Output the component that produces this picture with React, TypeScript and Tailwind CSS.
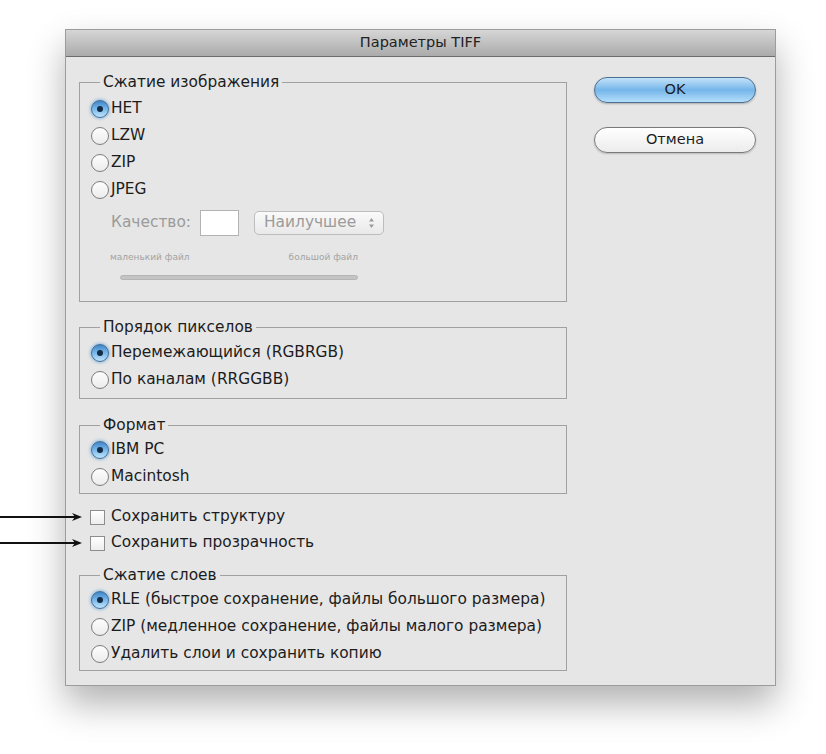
import React from 'react'

function Radio({ checked }: { checked?: boolean }) {
  if (checked) {
    return (
      <span className="w-[18px] h-[18px] shrink-0 rounded-full border border-[#3f6d98] bg-linear-to-b from-[#3f86c8] via-[#79b8ea] to-[#bfe3fb] flex items-center justify-center shadow-[0_0_3px_1px_rgba(80,150,215,0.55)]">
        <span className="w-[6px] h-[6px] rounded-full bg-[#142b44]" />
      </span>
    )
  }
  return <span className="w-[18px] h-[18px] shrink-0 rounded-full border border-[#7d7d7d] bg-linear-to-b from-[#fdfdfd] to-[#ececec]" />
}

function RadioRow({ label, checked }: { label: string; checked?: boolean }) {
  return (
    <div className="h-[27px] flex items-center gap-[2px]">
      <Radio checked={checked} />
      <span>{label}</span>
    </div>
  )
}

function Group({ title, children, className }: { title: string; children: React.ReactNode; className?: string }) {
  return (
    <fieldset className={`border border-[#a1a1a1] px-[11px] ${className ?? ''}`}>
      <legend className="ml-[9px] px-[3px] leading-[18px]">{title}</legend>
      {children}
    </fieldset>
  )
}

function Arrow() {
  return (
    <svg className="absolute left-[-79px] top-[8px]" width="84" height="10" viewBox="0 0 84 10">
      <line x1="0" y1="5" x2="76" y2="5" stroke="#111" strokeWidth="2" />
      <path d="M72 1 L82 5 L72 9 L75 5 Z" fill="#111" />
    </svg>
  )
}

function CheckRow({ label }: { label: string }) {
  return (
    <div className="relative h-[26px] flex items-center gap-[6px] pl-[11px]">
      <Arrow />
      <span className="w-[15px] h-[15px] shrink-0 border border-[#8d8d8d] bg-linear-to-b from-white to-[#ededed]" />
      <span>{label}</span>
    </div>
  )
}

export default function App() {
  return (
    <div className="w-[826px] h-[754px] bg-white pt-[29px] pl-[65px] font-['DejaVu_Sans',sans-serif] text-[15.4px] text-[#1c1c1c]">
      <div className="w-[711px] h-[657px] bg-[#e6e6e6] border border-[#9c9c9c] shadow-[0_18px_34px_rgba(0,0,0,0.3)]">
        {/* Title bar */}
        <div className="h-[27px] bg-linear-to-b from-[#d6d6d6] to-[#ababab] border-b border-[#6d6d6d] flex items-center justify-center text-[14.5px] text-[#222]">
          Параметры TIFF
        </div>

        <div className="flex pl-[13px] pt-[16px]">
          {/* Left column */}
          <div className="w-[488px] flex flex-col">
            <Group title="Сжатие изображения" className="pt-[4px] pb-[21px]">
              <RadioRow label="НЕТ" checked />
              <RadioRow label="LZW" />
              <RadioRow label="ZIP" />
              <RadioRow label="JPEG" />
              <div className="ml-[20px] mt-[7px] h-[26px] flex items-center text-[#9b9b9b]">
                <span>Качество:</span>
                <span className="ml-[9px] w-[39px] h-[26px] bg-white border border-[#b3b3b3]" />
                <div className="ml-[15px] w-[130px] h-[24px] rounded-[5px] border border-[#bdbdbd] bg-linear-to-b from-[#fafafa] to-[#e9e9e9] flex items-center pl-[9px] pr-[8px]">
                  <span className="flex-1">Наилучшее</span>
                  <svg width="7" height="12" viewBox="0 0 7 12">
                    <path d="M3.5 1 L6 4.5 L1 4.5 Z" fill="#9b9b9b" />
                    <path d="M3.5 11 L6 7.5 L1 7.5 Z" fill="#9b9b9b" />
                  </svg>
                </div>
              </div>
              <div className="ml-[19px] mt-[15px] h-[12px] flex items-center text-[9px] text-[#a3a3a3] leading-[12px]">
                <span>маленький файл</span>
                <span className="ml-[99px]">большой файл</span>
              </div>
              <div className="ml-[29px] mt-[12px] w-[238px] h-[5px] rounded-full bg-[#c4c4c4] border border-[#b5b5b5]" />
            </Group>

            <Group title="Порядок пикселов" className="mt-[16px] pt-[3px] pb-[5px]">
              <RadioRow label="Перемежающийся (RGBRGB)" checked />
              <RadioRow label="По каналам (RRGGBB)" />
            </Group>

            <Group title="Формат" className="mt-[17px] pt-[2px] pb-[3px]">
              <RadioRow label="IBM PC" checked />
              <RadioRow label="Macintosh" />
            </Group>

            <div className="mt-[10px]">
              <CheckRow label="Сохранить структуру" />
              <CheckRow label="Сохранить прозрачность" />
            </div>

            <Group title="Сжатие слоев" className="mt-[10px] pt-[2px] pb-[3px]">
              <RadioRow label="RLE (быстрое сохранение, файлы большого размера)" checked />
              <RadioRow label="ZIP (медленное сохранение, файлы малого размера)" />
              <RadioRow label="Удалить слои и сохранить копию" />
            </Group>
          </div>

          {/* Right column */}
          <div className="ml-[27px] w-[162px] mt-[4px] flex flex-col gap-[24px] text-[14.5px]">
            <button className="h-[26px] rounded-full border border-[#4d6f91] bg-linear-to-b from-[#c3e2f8] via-[#74b6ea] to-[#b4defb] text-[#1d1d1d] shadow-[0_1px_2px_rgba(0,0,0,0.25)]">
              OK
            </button>
            <button className="h-[26px] rounded-full border border-[#7a7a7a] bg-linear-to-b from-white to-[#ececec] text-[#1d1d1d] shadow-[0_1px_2px_rgba(0,0,0,0.2)]">
              Отмена
            </button>
          </div>
        </div>
      </div>
    </div>
  )
}
